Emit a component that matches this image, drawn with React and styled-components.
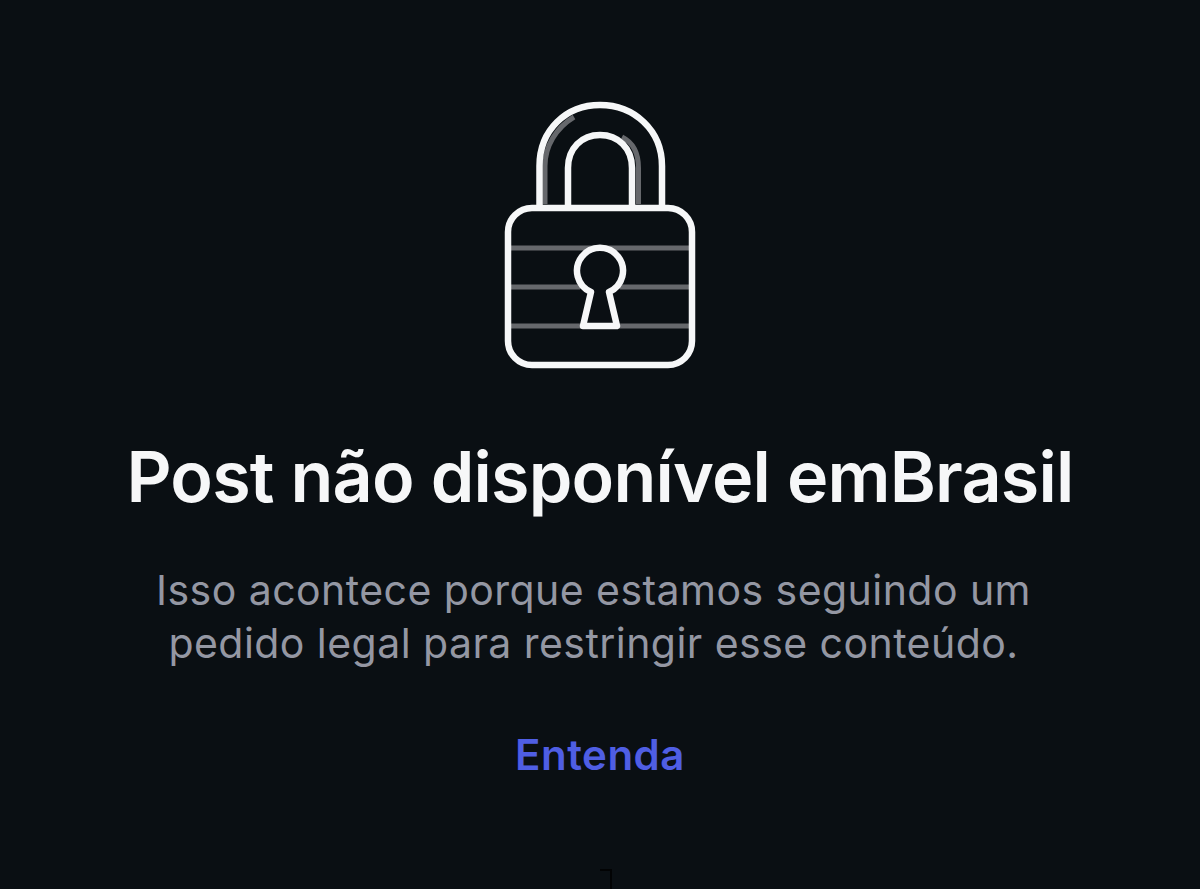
import React from 'react'
import styled, { createGlobalStyle } from 'styled-components'

const Global = createGlobalStyle`
  html, body { margin: 0; padding: 0; background: #0a0f13; }
`

const Screen = styled.div`
  position: relative;
  width: 1200px;
  height: 889px;
  overflow: hidden;
  background: #0a0f13;
  display: flex;
  flex-direction: column;
  align-items: center;
  padding-top: 100px;
  box-sizing: border-box;
  font-family: Inter, "Liberation Sans", sans-serif;
`

const LockIcon = styled.svg`
  display: block;
  width: 200px;
  height: 270px;
`

const Title = styled.h1`
  margin: 67px 0 0;
  font-size: 70px;
  line-height: 80px;
  font-weight: 600;
  letter-spacing: -0.8px;
  color: #f6f7f8;
  white-space: nowrap;
`

const Message = styled.p`
  margin: 47px 13px 0 0;
  font-size: 41px;
  line-height: 53px;
  font-weight: 400;
  letter-spacing: 0.45px;
  color: #9497a3;
  text-align: center;
  white-space: nowrap;
`

const LearnMore = styled.a`
  margin-top: 60px;
  font-size: 42px;
  line-height: 50px;
  font-weight: 600;
  letter-spacing: 0.5px;
  color: #4f5ee4;
  cursor: pointer;
`

// little notch poking up from the bottom edge
const Notch = styled.span`
  position: absolute;
  left: 600px;
  bottom: 0;
  width: 12px;
  height: 20px;
  border-top: 2px solid #020304;
  border-right: 2px solid #020304;
  box-sizing: border-box;
`

function Lock() {
  return (
    <LockIcon viewBox="500 100 200 270" fill="none">
      <g stroke="#66686c" strokeWidth="5">
        <path d="M545 204V166C545 146 556 128 574 117" />
        <path d="M638.5 204V168C638.5 152 632 142 622 137" />
        <path d="M511 248H689M511 287H580M620 287H689M511 326H582M618 326H689" />
      </g>
      <g stroke="#f6f7f8" strokeWidth="6.5" strokeLinejoin="round">
        <path d="M539.5 206V166C539.5 130 566 105 600 105C634 105 662 130 662 166V206" />
        <path d="M568 206V168C568 148 582 135 600 135C618 135 632 148 632 168V206" />
        <rect x="508" y="208" width="184" height="157" rx="24" />
        <path d="M591 292A23 23 0 1 1 609 292L617 326H583Z" />
      </g>
    </LockIcon>
  )
}

export default function App() {
  return (
    <Screen>
      <Global />
      <Lock />
      <Title>Post não disponível emBrasil</Title>
      <Message>
        Isso acontece porque estamos seguindo um
        <br />
        pedido legal para restringir esse conteúdo.
      </Message>
      <LearnMore>Entenda</LearnMore>
      <Notch />
    </Screen>
  )
}
